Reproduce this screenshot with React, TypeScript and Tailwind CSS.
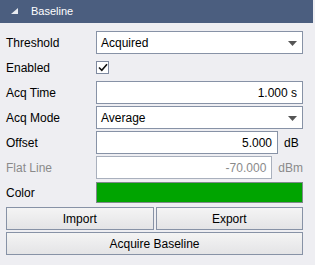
import React from "react";

const font = { fontFamily: '"Liberation Sans", Arial, sans-serif' };

function Arrow() {
  return (
    <svg width="9" height="5" viewBox="0 0 9 5" className="absolute right-[5px] top-[9px]">
      <path d="M0 0 H9 L4.5 5 Z" fill="#555" />
    </svg>
  );
}

function Label({ children, disabled }: { children: React.ReactNode; disabled?: boolean }) {
  return (
    <div className={`w-[90px] shrink-0 text-[12px] ${disabled ? "text-[#8a8a8a]" : "text-black"}`}>{children}</div>
  );
}

function Select({ value }: { value: string }) {
  return (
    <div className="relative flex-1 h-[23px] bg-white border border-[#8792a6] flex items-center pl-[4px] text-[12px] text-black">
      {value}
      <Arrow />
    </div>
  );
}

function Input({ value, disabled, className = "" }: { value: string; disabled?: boolean; className?: string }) {
  return (
    <div
      className={`h-[23px] bg-white border ${disabled ? "border-[#a9b0bd] text-[#8a8a8a]" : "border-[#8792a6] text-black"} flex items-center justify-end pr-[5px] text-[12px] ${className}`}
    >
      {value}
    </div>
  );
}

function Button({ children, className = "" }: { children: React.ReactNode; className?: string }) {
  return (
    <div
      className={`h-[23px] border border-[#8792a6] bg-gradient-to-b from-[#f4f4f4] to-[#e4e4e6] flex items-center justify-center text-[12px] text-black ${className}`}
    >
      {children}
    </div>
  );
}

export default function App() {
  return (
    <div className="w-[315px] h-[265px] bg-[#eeeef2] overflow-hidden" style={font}>
      <div className="w-[313px] h-[23px] bg-[#4b5e7f] flex items-center">
        <svg width="7" height="6" viewBox="0 0 7 6" className="ml-[11px] mt-[-1px]">
          <path d="M7 0 V6 H0 Z" fill="#e8ebf0" />
        </svg>
        <span className="ml-[13px] text-[11px] text-white">Baseline</span>
      </div>
      <div className="pl-[6px] pr-[12px] pt-[8px] flex flex-col gap-[2px]">
        <div className="flex items-center h-[23px]">
          <Label>Threshold</Label>
          <Select value="Acquired" />
        </div>
        <div className="flex items-center h-[23px]">
          <Label>Enabled</Label>
          <div className="w-[13px] h-[13px] bg-white border border-[#7f8aa0] flex items-center justify-center">
            <svg width="10" height="9" viewBox="0 0 10 9">
              <path d="M1 4.5 L3.8 7.3 L9 1.2" fill="none" stroke="#111" strokeWidth="1.6" />
            </svg>
          </div>
        </div>
        <div className="flex items-center h-[23px]">
          <Label>Acq Time</Label>
          <Input value="1.000 s" className="flex-1" />
        </div>
        <div className="flex items-center h-[23px]">
          <Label>Acq Mode</Label>
          <Select value="Average" />
        </div>
        <div className="flex items-center h-[23px]">
          <Label>Offset</Label>
          <Input value="5.000" className="w-[182px]" />
          <span className="ml-[6px] text-[12px] text-black">dB</span>
        </div>
        <div className="flex items-center h-[23px]">
          <Label disabled>Flat Line</Label>
          <Input value="-70.000" disabled className="w-[182px]" />
          <span className="ml-[6px] text-[12px] text-[#8a8a8a]">dBm</span>
        </div>
        <div className="flex items-center h-[23px]">
          <Label>Color</Label>
          <div className="flex-1 h-[21px] bg-[#00a400] border border-[#7d8a8a]" />
        </div>
        <div className="flex gap-[2px] mt-[1px]">
          <Button className="flex-1">Import</Button>
          <Button className="flex-1">Export</Button>
        </div>
        <Button>Acquire Baseline</Button>
      </div>
    </div>
  );
}
